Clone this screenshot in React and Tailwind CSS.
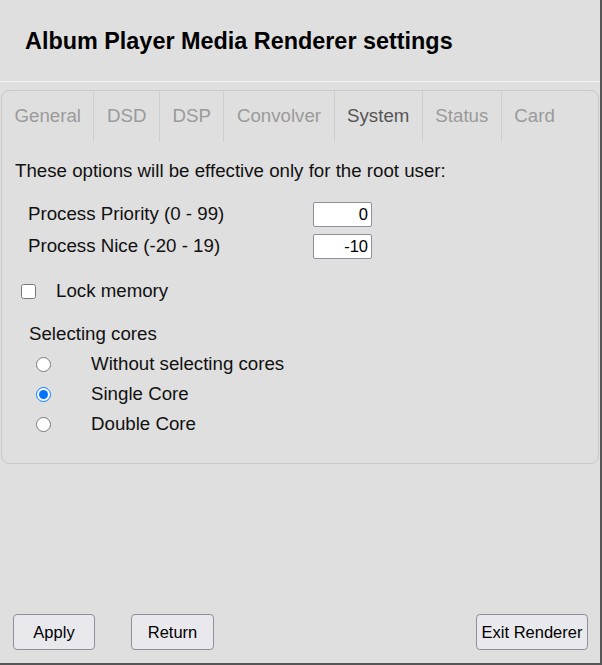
import React, { useState } from "react";

const TABS = ["General", "DSD", "DSP", "Convolver", "System", "Status", "Card"];

const CORES = [
  { id: "none", label: "Without selecting cores" },
  { id: "single", label: "Single Core" },
  { id: "double", label: "Double Core" },
];

function NumberField({ label, value }) {
  return (
    <div className="flex h-[32px] items-center pl-[26px]">
      <span className="w-[285px]">{label}</span>
      <input
        type="text"
        defaultValue={value}
        className="h-[25px] w-[59px] rounded-[2px] border border-[#8f8f9d] bg-white px-[3px] text-right text-[16.5px] text-black outline-none"
      />
    </div>
  );
}

export default function App() {
  const [tab, setTab] = useState("System");
  const [cores, setCores] = useState("single");
  const [lockMem, setLockMem] = useState(false);

  return (
    <div
      className="flex h-[665px] w-[602px] flex-col border-r-2 border-b-2 border-[#555] bg-[#dfdfdf] text-[#111]"
      style={{ fontFamily: '"Liberation Sans", Arial, sans-serif' }}
    >
      {/* Header */}
      <header className="flex h-[82px] items-center border-b border-[#f2f2f2] pl-[25px] pt-[3px]">
        <h1 className="text-[23.4px] font-bold text-black">
          Album Player Media Renderer settings
        </h1>
      </header>

      {/* Tab panel */}
      <section className="mx-[1px] mt-[8px] rounded-[8px] border border-[#c9c9c9] pb-[24px]">
        <nav className="flex h-[51px]">
          {TABS.map((t, i) => (
            <button
              key={t}
              onClick={() => setTab(t)}
              className={
                "px-[12.5px] text-[18.7px] " +
                (i < TABS.length - 1 ? "border-r border-[#cfcfcf] " : "") +
                (t === tab ? "text-[#555]" : "text-[#9a9a9a]")
              }
            >
              {t}
            </button>
          ))}
        </nav>

        <div className="text-[18.7px]">
          <p className="mt-[18px] pl-[13px] leading-[22px]">
            These options will be effective only for the root user:
          </p>

          <div className="mt-[16px]">
            <NumberField label="Process Priority (0 - 99)" value="0" />
            <NumberField label="Process Nice (-20 - 19)" value="-10" />
          </div>

          <label className="mt-[13px] flex h-[32px] items-center pl-[19px]">
            <input
              type="checkbox"
              checked={lockMem}
              onChange={(e) => setLockMem(e.target.checked)}
              className="m-0 h-[15px] w-[15px]"
            />
            <span className="ml-[20px]">Lock memory</span>
          </label>

          <p className="mt-[16px] pl-[27px] leading-[22px]">Selecting cores</p>

          <div className="mt-[4px]">
            {CORES.map((c) => (
              <label key={c.id} className="flex h-[30px] items-center pl-[34px]">
                <input
                  type="radio"
                  name="cores"
                  checked={cores === c.id}
                  onChange={() => setCores(c.id)}
                  className="m-0 h-[15px] w-[15px]"
                />
                <span className="ml-[40px]">{c.label}</span>
              </label>
            ))}
          </div>
        </div>
      </section>

      {/* Footer buttons */}
      <footer className="mt-auto mb-[13px] flex items-center pl-[13px] pr-[12px] text-[16.5px] text-black">
        <button className="h-[36px] w-[82px] rounded-[4px] border border-[#8f8f9d] bg-[#e9e9ed]">
          Apply
        </button>
        <button className="ml-[36px] h-[36px] w-[83px] rounded-[4px] border border-[#8f8f9d] bg-[#e9e9ed]">
          Return
        </button>
        <button className="ml-auto h-[36px] w-[112px] rounded-[4px] border border-[#8f8f9d] bg-[#e9e9ed]">
          Exit Renderer
        </button>
      </footer>
    </div>
  );
}
